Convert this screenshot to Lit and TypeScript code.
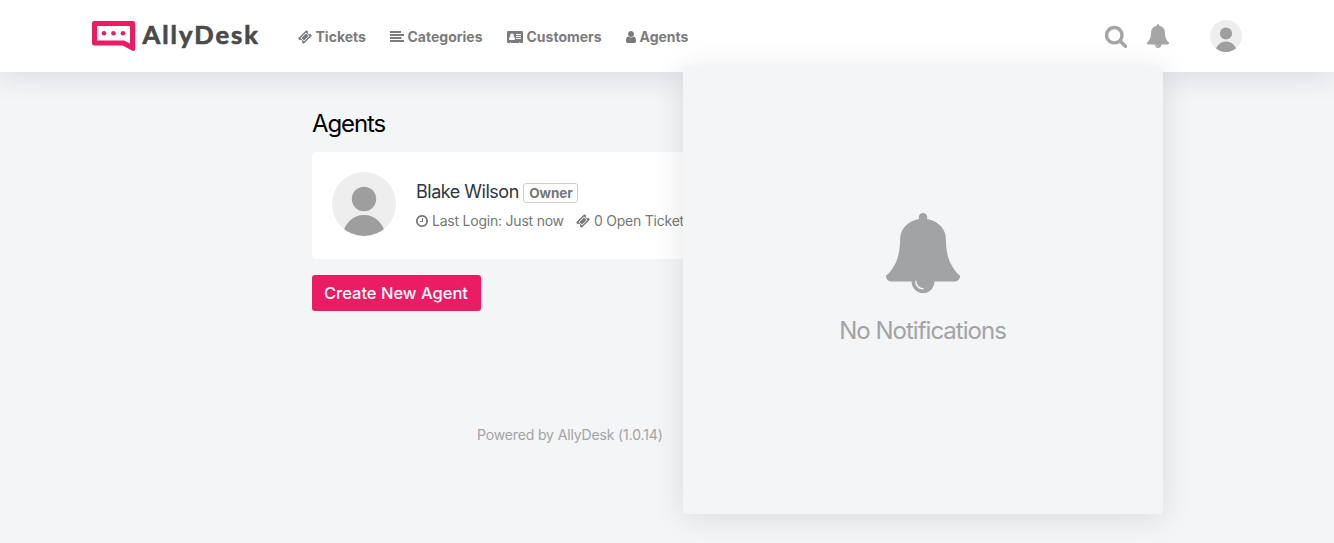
import { LitElement, html, css, svg } from "lit";
import { customElement } from "lit/decorators.js";

const glyphs = {
  bell: svg`<path d="M912 1696q0-16-16-16-59 0-101.500-42.500t-42.500-101.500q0-16-16-16t-16 16q0 73 51.500 124.500t124.500 51.500q16 0 16-16zm816-288q0 52-38 90t-90 38h-448q0 106-75 181t-181 75-181-75-75-181h-448q-52 0-90-38t-38-90q50-42 91-88t85-119.500 74.500-158.500 50-206 19.500-260q0-152 117-282.500t307-158.500q-8-19-8-39 0-40 28-68t68-28 68 28 28 68q0 20-8 39 190 28 307 158.500t117 282.500q0 139 19.500 260t50 206 74.500 158.500 85 119.500 91 88z"/>`,
  search: svg`<path d="M1216 832q0-185-131.500-316.500t-316.500-131.500-316.500 131.500-131.500 316.500 131.500 316.500 316.500 131.500 316.500-131.500 131.500-316.500zm512 832q0 52-38 90t-90 38q-54 0-90-38l-343-342q-179 124-399 124-143 0-273.500-55.500t-225-150-150-225-55.500-273.500 55.500-273.500 150-225 225-150 273.500-55.500 273.500 55.500 225 150 150 225 55.500 273.500q0 220-124 399l343 343q37 37 37 90z"/>`,
  ticket: svg`<path d="M1024 452l316 316-572 572-316-316zm-211 979l618-618q19-19 19-45t-19-45l-362-362q-18-18-45-18t-45 18l-618 618q-19 19-19 45t19 45l362 362q18 18 45 18t45-18zm889-637l-907 908q-37 37-90.500 37t-90.500-37l-126-126q56-56 56-136t-56-136-136-56-136 56l-125-126q-37-37-37-90.500t37-90.500l907-906q37-37 90.500-37t90.500 37l125 125q-56 56-56 136t56 136 136 56 136-56l126 125q37 37 37 90.500t-37 90.500z"/>`,
  clock: svg`<path d="M1024 544v448q0 14-9 23t-23 9h-320q-14 0-23-9t-9-23v-64q0-14 9-23t23-9h224v-352q0-14 9-23t23-9h64q14 0 23 9t9 23zm416 352q0-148-73-273t-198-198-273-73-273 73-198 198-73 273 73 273 198 198 273 73 273-73 198-198 73-273zm224 0q0 209-103 385.500t-279.500 279.500-385.500 103-385.500-103-279.500-279.500-103-385.500 103-385.500 279.500-279.500 385.500-103 385.500 103 279.500 279.500 103 385.500z"/>`,
  user: svg`<path d="M1536 1399q0 109-62.500 187t-150.500 78h-854q-88 0-150.500-78t-62.500-187q0-85 8.500-160.500t31.500-152 58.500-131 94-89 134.500-34.500q131 128 313 128t313-128q76 0 134.500 34.500t94 89 58.500 131 31.500 152 8.500 160.500zm-256-887q0 159-112.500 271.500t-271.500 112.500-271.500-112.500-112.500-271.500 112.500-271.500 271.500-112.500 271.500 112.500 112.500 271.500z"/>`,
};

const avatar = html`<svg class="avatar" viewBox="0 0 64 64">
  <defs><clipPath id="disc"><circle cx="32" cy="32" r="32" /></clipPath></defs>
  <circle cx="32" cy="32" r="32" fill="#eee" />
  <g clip-path="url(#disc)" fill="#9e9e9e">
    <circle cx="32" cy="27" r="12.2" />
    <path d="M10 64C12.500 51 21 43 32 43s19.500 8 22 21z" />
  </g>
</svg>`;

@customElement("app-header")
export class AppHeader extends LitElement {
  static styles = css`
    :host { display: block; background: #fff; box-shadow: 0 4px 30px rgba(60, 65, 90, 0.14); }
    .bar { display: flex; align-items: center; height: 72px; padding: 0 92px; box-sizing: border-box; }
    .logo { display: block; width: 168px; height: 36px; }
    .word { font: 700 25.5px Lato, sans-serif; }
    nav { display: flex; gap: 24px; margin-left: 38px; padding-top: 2px; }
    .link { display: flex; align-items: center; gap: 3.5px; font-size: 14px; line-height: 20px; font-weight: 700; color: #7b7b7b; }
    .label { display: block; white-space: nowrap; letter-spacing: 0; }
    .tickets { width: 50.5px; }
    .categories { width: 75.5px; }
    .customers { width: 75.5px; }
    .agents { width: 49px; }
    .link svg { display: block; height: 14px; fill: #7b7b7b; }
    .actions { display: flex; align-items: center; margin-left: auto; }
    .actions .tool { display: block; width: 24px; height: 24px; fill: #a6a6a6; }
    .search { margin: 0 18.5px 0 0; }
    .alerts { margin: 0 40px 0 0; }
    .avatar { display: block; width: 32px; height: 32px; }
  `;
  render() {
    return html`<header class="bar">
      <svg class="logo" viewBox="0 0 168 36">
        <path fill="#ec1c64" fill-rule="evenodd" d="M2 3H41Q43 3 43 5V31Q43 34 40 32.500L30.500 27.500H2Q0 27.500 0 25.500V5Q0 3 2 3ZM5 8V22.500H32L38 25.500V8Z" />
        <g fill="#ec1c64"><circle cx="12" cy="15.200" r="2.300" /><circle cx="21.500" cy="15.200" r="2.300" /><circle cx="31" cy="15.200" r="2.300" /></g>
        <text class="word" x="50.500" y="25.500" textLength="115.500" fill="#4a4a4a" stroke="#4a4a4a" stroke-width=".7" stroke-linejoin="round">AllyDesk</text>
      </svg>
      <nav>
        <a class="link"><svg width="14" viewBox="0 0 1792 1792">${glyphs.ticket}</svg><span class="label tickets">Tickets</span></a>
        <a class="link"><svg width="14" viewBox="0 0 14 14"><path d="M0 1h11v2H0zM0 4h14v2H0zM0 7h11.500v2H0zM0 10h14v2H0z" /></svg><span class="label categories">Categories</span></a>
        <a class="link"><svg width="16" viewBox="0 0 16 14"><path fill-rule="evenodd" d="M1.200 1h13.600Q16 1 16 2.200v9.600Q16 13 14.800 13H13v-.7h-1v.7H4v-.7H3v.7H1.200Q0 13 0 11.800V2.200Q0 1 1.200 1zM9 4v1h5V4zm0 2v1h5V6zm0 2v1h5V8zM5 3.500a1.800 1.800 0 0 0-1.300 3.100C2.500 6.900 2 7.900 2 9.200q0 .8.800.8h4.400q.8 0 .8-.8c0-1.300-.5-2.300-1.700-2.600A1.800 1.800 0 0 0 5 3.500z" /></svg><span class="label customers">Customers</span></a>
        <a class="link"><svg width="10" viewBox="256 0 1280 1792">${glyphs.user}</svg><span class="label agents">Agents</span></a>
      </nav>
      <div class="actions">
        <svg class="tool search" viewBox="0 0 1792 1792">${glyphs.search}</svg>
        <svg class="tool alerts" viewBox="0 0 1792 1792">${glyphs.bell}</svg>
        ${avatar}
      </div>
    </header>`;
  }
}

@customElement("notification-panel")
export class NotificationPanel extends LitElement {
  static styles = css`
    :host { display: flex; flex-direction: column; align-items: center; box-sizing: border-box; width: 480px; height: 448px; padding-top: 147px; border-radius: 4px; background: #f3f5f7; box-shadow: 0 4px 32px rgba(0, 0, 0, 0.11); color: #a3a3a5; }
    .icon { display: block; width: 80px; height: 80px; fill: #a2a3a5; }
    .empty { margin: 20px 1px 0 0; font-size: 24px; line-height: 36px; letter-spacing: -0.98px; white-space: nowrap; }
  `;
  render() {
    return html`<svg class="icon" viewBox="0 0 1792 1792">${glyphs.bell}</svg>
      <div class="empty">No Notifications</div>`;
  }
}

@customElement("app-root")
export class AppRoot extends LitElement {
  static styles = css`
    :host { display: block; position: relative; height: 543px; overflow: hidden; background: #f3f5f7; font-family: Inter, "Liberation Sans", sans-serif; }
    main { width: 710px; margin: 0 auto; padding-top: 34px; }
    h1 { margin: 0 0 10px; font-size: 24px; line-height: 36px; font-weight: 400; letter-spacing: -1.1px; color: #000; }
    .card { display: flex; align-items: flex-start; gap: 20px; height: 107px; box-sizing: border-box; padding: 20px; border-radius: 4px; background: #fff; }
    .avatar { display: block; width: 64px; height: 64px; }
    .info { padding-top: 5px; }
    .row { display: flex; align-items: center; height: 28px; }
    .name { font-size: 18px; letter-spacing: -0.49px; color: #2f363d; margin-right: 4.5px; white-space: nowrap; }
    .tag { box-sizing: border-box; width: 55px; height: 20px; margin-top: 4px; padding: 0 5px; border: 1px solid #cbd0d8; border-radius: 3px; font-size: 13.500px; line-height: 19px; font-weight: 700; letter-spacing: -0.1px; color: #777; }
    .meta { height: 20px; margin-top: 5px; font-size: 14px; letter-spacing: -0.22px; color: #777; white-space: nowrap; }
    .meta svg { display: block; height: 14px; fill: #777; margin: 1px 4px 0 0; }
    .login { margin-right: 12px; }
    .create { display: block; box-sizing: border-box; width: 169px; height: 36px; margin-top: 16px; padding: 0 12px; border: 0; border-radius: 3px; background: #ec1c64; color: #fff; font: 500 16.5px/36px Inter, sans-serif; letter-spacing: 0; white-space: nowrap; text-align: left; }
    footer { display: flex; width: 380px; margin: 114px auto 0; font-size: 14px; line-height: 20px; letter-spacing: -0.14px; color: #a3a3a3; }
    .panel { position: absolute; top: 66px; left: 683px; }
  `;
  render() {
    return html`<app-header></app-header>
      <main>
        <h1><span>Agents</span></h1>
        <section class="card">
          ${avatar}
          <div class="info">
            <div class="row"><span class="name">Blake Wilson</span><span class="tag">Owner</span></div>
            <div class="row meta">
              <svg width="12" viewBox="128 0 1536 1792">${glyphs.clock}</svg><span class="login">Last Login: Just now</span>
              <svg width="14" viewBox="0 0 1792 1792">${glyphs.ticket}</svg><span>0 Open Tickets</span>
            </div>
          </div>
        </section>
        <button class="create">Create New Agent</button>
      </main>
      <footer><span>Powered by AllyDesk (1.0.14)</span></footer>
      <notification-panel class="panel"></notification-panel>`;
  }
}
